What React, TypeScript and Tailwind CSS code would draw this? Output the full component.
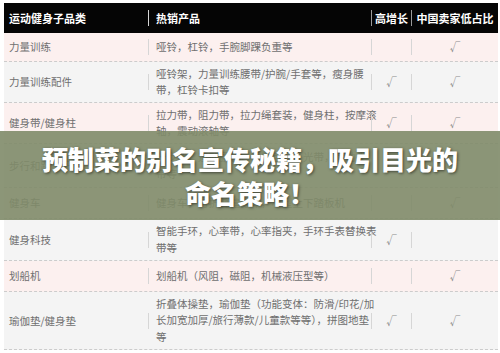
import React from 'react';

type Row = {
  cat: string;
  lines: string[];
  up: boolean;
  low: boolean;
  h: string;
};

const rows: Row[] = [
  { cat: '力量训练', lines: ['哑铃，杠铃，手腕脚踝负重等'], up: false, low: true, h: 'h-[29px]' },
  { cat: '力量训练配件', lines: ['哑铃架，力量训练腰带/护腕/手套等，瘦身腰', '带，杠铃卡扣等'], up: true, low: true, h: 'h-[41px]' },
  { cat: '健身带/健身柱', lines: ['拉力带，阻力带，拉力绳套装，健身柱，按摩滚', '轴，震动滚轴等'], up: true, low: true, h: 'h-[41px]' },
  { cat: '步行和跑步配件', lines: ['计步器，运动腰包，手臂包，反光带，运动头', '带等'], up: false, low: true, h: 'h-[44px]' },
  { cat: '健身车', lines: ['健身车，可折叠健身车，小型上下踏板机'], up: false, low: true, h: 'h-[31px]' },
  { cat: '健身科技', lines: ['智能手环，心率带，心率指夹，手环手表替换表', '带等'], up: true, low: false, h: 'h-[42px]' },
  { cat: '划船机', lines: ['划船机（风阻，磁阻，机械液压型等）'], up: false, low: true, h: 'h-[31px]' },
  { cat: '瑜伽垫/健身垫', lines: ['折叠体操垫，瑜伽垫（功能变体：防滑/印花/加', '长加宽加厚/旅行薄款/儿童款等等），拼图地垫', '等'], up: true, low: true, h: 'h-[58px]' },
];

const Sep = () => <div className="w-px h-[16px] self-center bg-[#d6d6d6] shrink-0" />;

const App: React.FC = () => {
  return (
    <div className="relative w-[500px] h-[353px] overflow-hidden bg-white font-['Noto_Sans_CJK_SC','Noto_Sans',sans-serif]">
      <div className="pt-[3px] pl-[4px] pr-[2px]">
        {/* header */}
        <div className="flex h-[30px] bg-[#050505] text-white text-[11px] font-bold">
          <div className="w-[144px] flex items-center pl-[5px]">运动健身子品类</div>
          <Sep />
          <div className="w-[222px] flex items-center pl-[7px]">热销产品</div>
          <div className="w-px h-[16px] self-center bg-[#9a9a9a]" />
          <div className="w-[39px] flex items-center justify-center">高增长</div>
          <div className="w-px h-[16px] self-center bg-[#9a9a9a]" />
          <div className="flex-1 flex items-center justify-center">中国卖家低占比</div>
        </div>

        {rows.map((r, i) => (
          <div
            key={r.cat}
            className={`flex ${r.h} border-b border-dashed border-[#cccccc] text-[10.5px] text-[#6f6f6f] ${i % 2 === 0 ? 'bg-[#fcf0ef]' : 'bg-[#f4f4f4]'}`}
          >
            <div className="w-[144px] flex items-center pl-[5px]">{r.cat}</div>
            <Sep />
            <div className="w-[222px] flex flex-col justify-center pl-[7px] leading-[16.5px] whitespace-nowrap">
              {r.lines.map((l) => (
                <span key={l}>{l}</span>
              ))}
            </div>
            <Sep />
            <div className="w-[39px] flex items-center justify-center text-[#8a8a8a]">{r.up ? '√' : ''}</div>
            <Sep />
            <div className="flex-1 flex items-center justify-center text-[#8a8a8a]">{r.low ? '√' : ''}</div>
          </div>
        ))}
      </div>

      {/* title overlay */}
      <div className="absolute left-0 right-0 top-[131px] h-[89px] bg-[#7f8b69]/90 flex flex-col items-center justify-center text-white text-[26px] font-black leading-[34px] [text-shadow:1px_1px_3px_rgba(0,0,0,0.55)]">
        <div>预制菜的别名宣传秘籍，吸引目光的</div>
        <div>命名策略！</div>
      </div>
    </div>
  );
};

export default App;
